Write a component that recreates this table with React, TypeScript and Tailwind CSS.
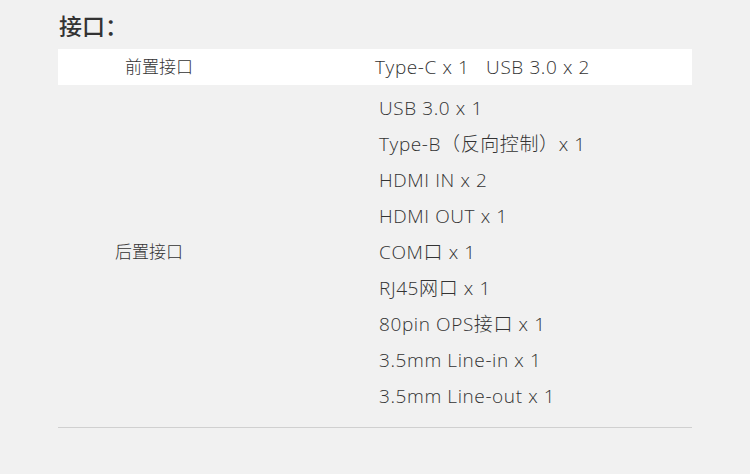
const backPorts = [
  "USB 3.0 x 1",
  "Type-B（反向控制）x 1",
  "HDMI IN x 2",
  "HDMI OUT x 1",
  "COM口 x 1",
  "RJ45网口 x 1",
  "80pin OPS接口 x 1",
  "3.5mm Line-in x 1",
  "3.5mm Line-out x 1",
];

const font = "font-['Open_Sans','Noto_Sans_CJK_SC',sans-serif]";

export default function App() {
  return (
    <div className={`w-[750px] h-[474px] bg-[#f1f1f1] text-[#333] ${font}`}>
      <div className="px-[58px] pt-[11px]">
        <h2 className="pl-[1px] text-[23px] font-medium leading-[30px] text-[#333]">接口：</h2>

        <div className="mt-[8px] flex h-[36px] w-[634px] items-center bg-white">
          <div className="w-[317px] pl-[67px] text-[17px] font-light">前置接口</div>
          <div className="text-[19px] font-light tracking-[0.6px]">
            Type-C x 1&nbsp;&nbsp;&nbsp;USB 3.0 x 2
          </div>
        </div>

        <div className="flex w-[634px] pt-[5px] pb-[13px] border-b border-[#d0d0d0]">
          <div className="flex w-[321px] items-center pl-[57px] text-[17px] font-light">后置接口</div>
          <div className="flex flex-col">
            {backPorts.map((p) => (
              <div key={p} className="flex h-[36px] items-center text-[19px] font-light tracking-[0.6px]">
                {p}
              </div>
            ))}
          </div>
        </div>
      </div>
    </div>
  );
}
